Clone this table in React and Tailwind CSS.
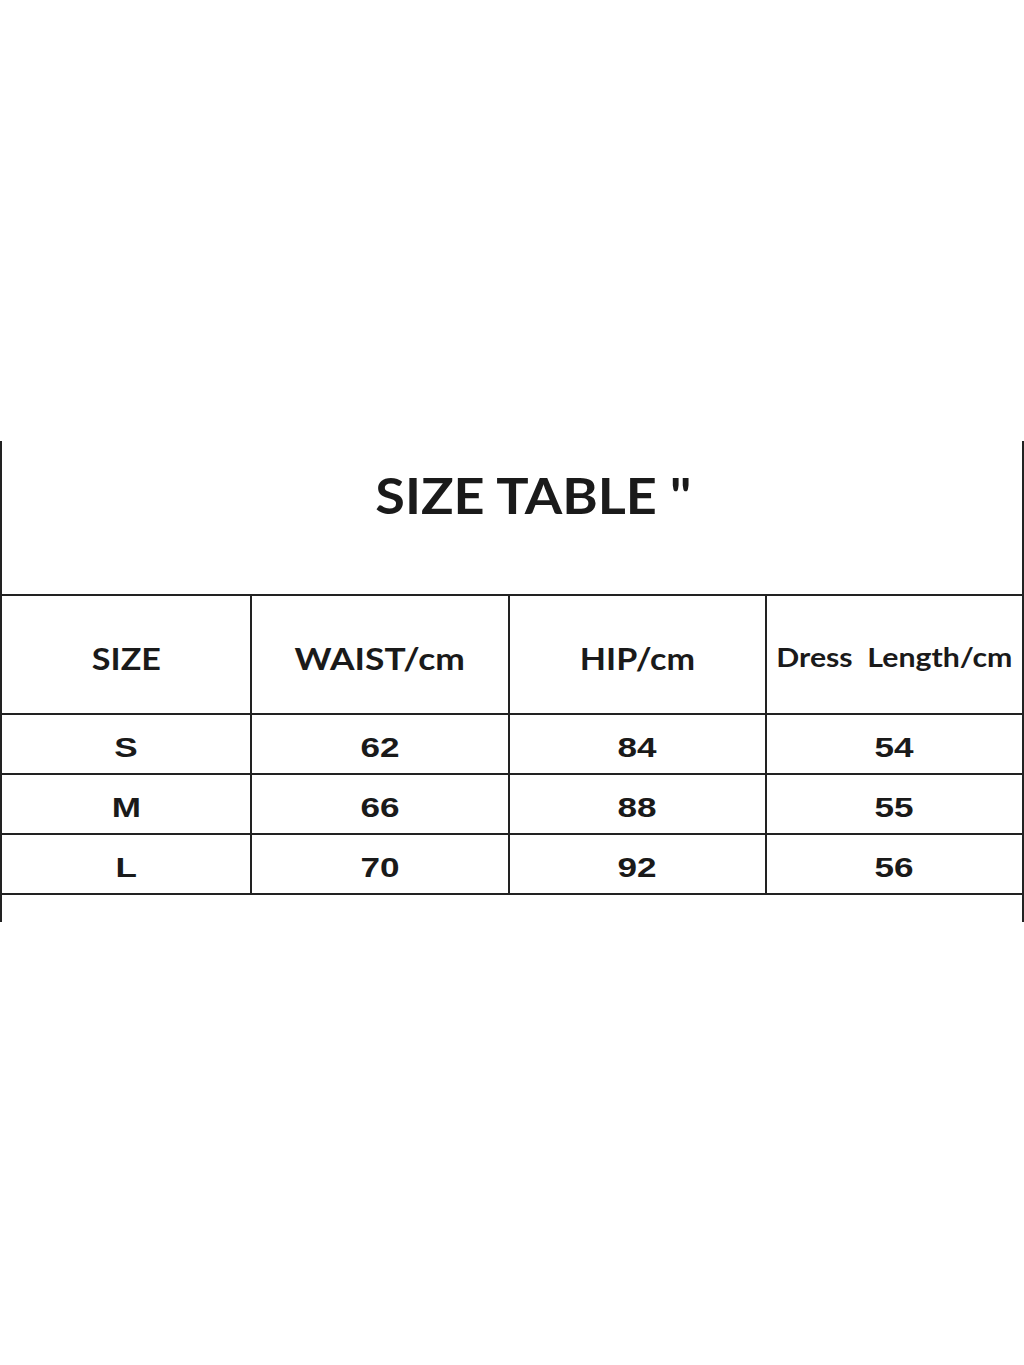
import React from 'react';

const rows = [
  { size: 'S', waist: '62', hip: '84', length: '54' },
  { size: 'M', waist: '66', hip: '88', length: '55' },
  { size: 'L', waist: '70', hip: '92', length: '56' },
];

const cols = 'grid grid-cols-[248px_258px_257px_1fr]';
const head = "font-['Lato','Open_Sans',sans-serif] font-bold text-[#1a1a1a]";
const num = "font-['Liberation_Sans',Arial,sans-serif] font-bold text-[#1a1a1a]";

const App = () => {
  return (
    <div className="min-h-[1365px] bg-white pt-[441px]">
      <div className="border-l-2 border-r-2 border-[#222]">
        {/* title */}
        <div className="flex h-[153px] justify-center pt-[24px] pl-[42px]">
          <h1 className={`${head} text-[50px] leading-[60px] scale-x-[1.08]`}>SIZE TABLE "</h1>
        </div>

        {/* header row */}
        <div className={`${cols} h-[121px] border-t-2 border-b-2 border-[#222]`}>
          <div className="flex items-center justify-center pt-[8px]">
            <span className={`${head} text-[31px] scale-x-[1.1]`}>SIZE</span>
          </div>
          <div className="flex items-center justify-center border-l-2 border-[#222] pt-[8px]">
            <span className={`${head} text-[31px] scale-x-[1.14]`}>WAIST/cm</span>
          </div>
          <div className="flex items-center justify-center border-l-2 border-[#222] pt-[8px]">
            <span className={`${head} text-[31px] scale-x-[1.1]`}>HIP/cm</span>
          </div>
          <div className="flex items-center justify-center border-l-2 border-[#222] pt-[6px]">
            <span className={`${head} text-[27px] whitespace-pre scale-x-[1.12]`}>Dress  Length/cm</span>
          </div>
        </div>

        {/* data rows */}
        {rows.map((r) => (
          <div key={r.size} className={`${cols} h-[60px] border-b-2 border-[#222]`}>
            {[r.size, r.waist, r.hip, r.length].map((v, i) => (
              <div
                key={i}
                className={`flex items-center justify-center pt-[9px] ${i > 0 ? 'border-l-2 border-[#222]' : ''}`}
              >
                <span className={`${num} text-[27px] scale-x-[1.3]`}>{v}</span>
              </div>
            ))}
          </div>
        ))}

        <div className="h-[27px]" />
      </div>
    </div>
  );
};

export default App;
